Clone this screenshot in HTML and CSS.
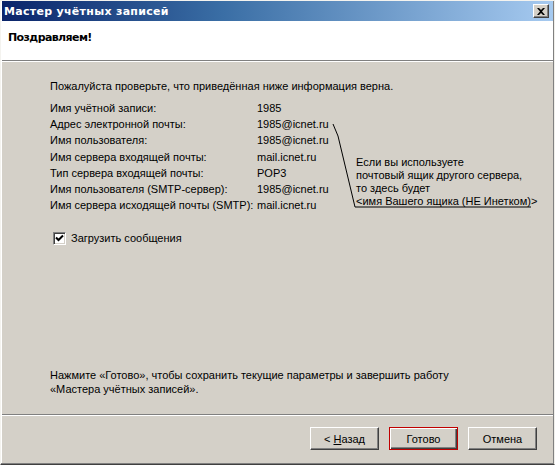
FILE: index.html
```html
<!DOCTYPE html>
<html lang="ru">
<head>
<meta charset="utf-8">
<title>Мастер учётных записей</title>
<link rel="stylesheet" href="styles.css">
</head>
<body>
<div class="window">
  <div class="titlebar">
    <span class="title">Мастер учётных записей</span>
    <span class="close"><svg width="8" height="7" viewBox="0 0 8 7"><path d="M0 0h2l2 2 2-2h2L5 3.5 8 7H6L4 5 2 7H0l3-3.5z" fill="#000"/></svg></span>
  </div>
  <div class="header">Поздравляем!</div>
  <div class="content">
    <p class="intro">Пожалуйста проверьте, что приведённая ниже информация верна.</p>
    <div class="info">
      <span>Имя учётной записи:</span><span>1985</span>
      <span>Адрес электронной почты:</span><span>1985@icnet.ru</span>
      <span>Имя пользователя:</span><span>1985@icnet.ru</span>
      <span>Имя сервера входящей почты:</span><span>mail.icnet.ru</span>
      <span>Тип сервера входящей почты:</span><span>POP3</span>
      <span>Имя пользователя (SMTP-сервер):</span><span>1985@icnet.ru</span>
      <span>Имя сервера исходящей почты (SMTP):</span><span>mail.icnet.ru</span>
    </div>
    <label class="check"><span class="box"><svg width="9" height="9" viewBox="0 0 9 9"><path d="M1 3.5l2.5 2.5L8 1.5" fill="none" stroke="#000" stroke-width="2"/></svg></span>Загрузить сообщения</label>
    <p class="finish">Нажмите «Готово», чтобы сохранить текущие параметры и завершить работу<br>«Мастера учётных записей».</p>
  </div>
  <div class="buttons">
    <span class="btn">&lt;&nbsp;<u>Н</u>азад</span>
    <span class="btn default">Готово</span>
    <span class="btn">Отмена</span>
  </div>
  <svg class="callout-line" width="555" height="465" viewBox="0 0 555 465"><polyline points="333,124 338,136 355,207 531,207" fill="none" stroke="#000" stroke-width="1"/></svg>
  <div class="callout">Если вы используете<br>почтовый ящик другого сервера,<br>то здесь будет<br>&lt;имя Вашего ящика (НЕ Инетком)&gt;</div>
</div>
</body>
</html>
```
FILE: styles.css
```css
html, body {
  margin: 0;
  padding: 0;
  background: #d4d0c8;
}
body {
  font-family: "Liberation Sans", Arial, sans-serif;
  font-size: 11px;
  color: #000;
  white-space: nowrap;
}
.window {
  position: relative;
  width: 555px;
  height: 465px;
  box-sizing: border-box;
  background: #d4d0c8;
  border-top: 1px solid #f4f3ef;
  border-left: 1px solid #f4f3ef;
  border-right: 1px solid #f0efea;
  border-bottom: 1px solid #404040;
  box-shadow: inset 0 -1px 0 #808080, inset -1px 0 0 #808080, inset 1px 0 0 #ffffff;
  display: flex;
  flex-direction: column;
  overflow: hidden;
}
.titlebar {
  height: 20px;
  margin: 0 1px;
  background: linear-gradient(to right, #0a246a 0%, #3a6ea5 40%, #a6caf0 100%);
  display: flex;
  align-items: center;
  justify-content: space-between;
  padding: 0 4px 0 2px;
}
.title {
  color: #fff;
  font-family: "DejaVu Sans", sans-serif;
  font-weight: bold;
  letter-spacing: 0.3px;
}
.close {
  width: 14px;
  height: 12px;
  background: #d4d0c8;
  border-top: 1px solid #fff;
  border-left: 1px solid #fff;
  border-right: 1px solid #404040;
  border-bottom: 1px solid #404040;
  box-shadow: inset -1px -1px 0 #808080;
  display: flex;
  align-items: center;
  justify-content: center;
}
.header {
  height: 40px;
  margin: 0 1px;
  background: #fff;
  font-family: "DejaVu Sans", sans-serif;
  font-weight: bold;
  padding: 10px 0 0 6px;
  box-sizing: border-box;
  border-bottom: 1px solid #808080;
  box-shadow: 0 1px 0 #fff;
  letter-spacing: -0.6px;
}
.content {
  flex: 1;
  display: flex;
  flex-direction: column;
  padding: 17px 0 18px 49px;
}
.intro {
  margin: 0;
  line-height: 16px;
}
.info {
  margin-top: 6px;
  display: grid;
  grid-template-columns: 207px auto;
  line-height: 16.2px;
}
.check {
  margin: 17px 0 0 3px;
  display: flex;
  align-items: center;
  gap: 5px;
  line-height: 16px;
}
.box {
  width: 9px;
  height: 9px;
  background: #fff;
  border-top: 1px solid #808080;
  border-left: 1px solid #808080;
  border-right: 1px solid #fff;
  border-bottom: 1px solid #fff;
  box-shadow: inset 1px 1px 0 #404040, inset -1px -1px 0 #d4d0c8;
  padding: 1px;
  display: flex;
}
.finish {
  margin: auto 0 0 0;
  line-height: 14px;
}
.buttons {
  border-top: 1px solid #808080;
  box-shadow: inset 0 1px 0 #fff;
  margin: 0 1px;
  height: 50px;
  box-sizing: border-box;
  display: flex;
  justify-content: flex-end;
  gap: 10px;
  padding: 12px 16px 0 0;
}
.btn {
  width: 69px;
  height: 23px;
  box-sizing: border-box;
  background: #d4d0c8;
  border-top: 1px solid #fff;
  border-left: 1px solid #fff;
  border-right: 1px solid #404040;
  border-bottom: 1px solid #404040;
  box-shadow: inset -1px -1px 0 #808080;
  display: flex;
  align-items: center;
  justify-content: center;
}
.btn.default {
  border: 1px solid #c00000;
  box-shadow: inset 1px 1px 0 #fff, inset -1px -1px 0 #404040, inset -2px -2px 0 #808080;
}
.callout-line {
  position: absolute;
  left: -1px;
  top: -1px;
  pointer-events: none;
}
.callout {
  position: absolute;
  left: 355px;
  top: 155px;
  line-height: 13px;
}
```
